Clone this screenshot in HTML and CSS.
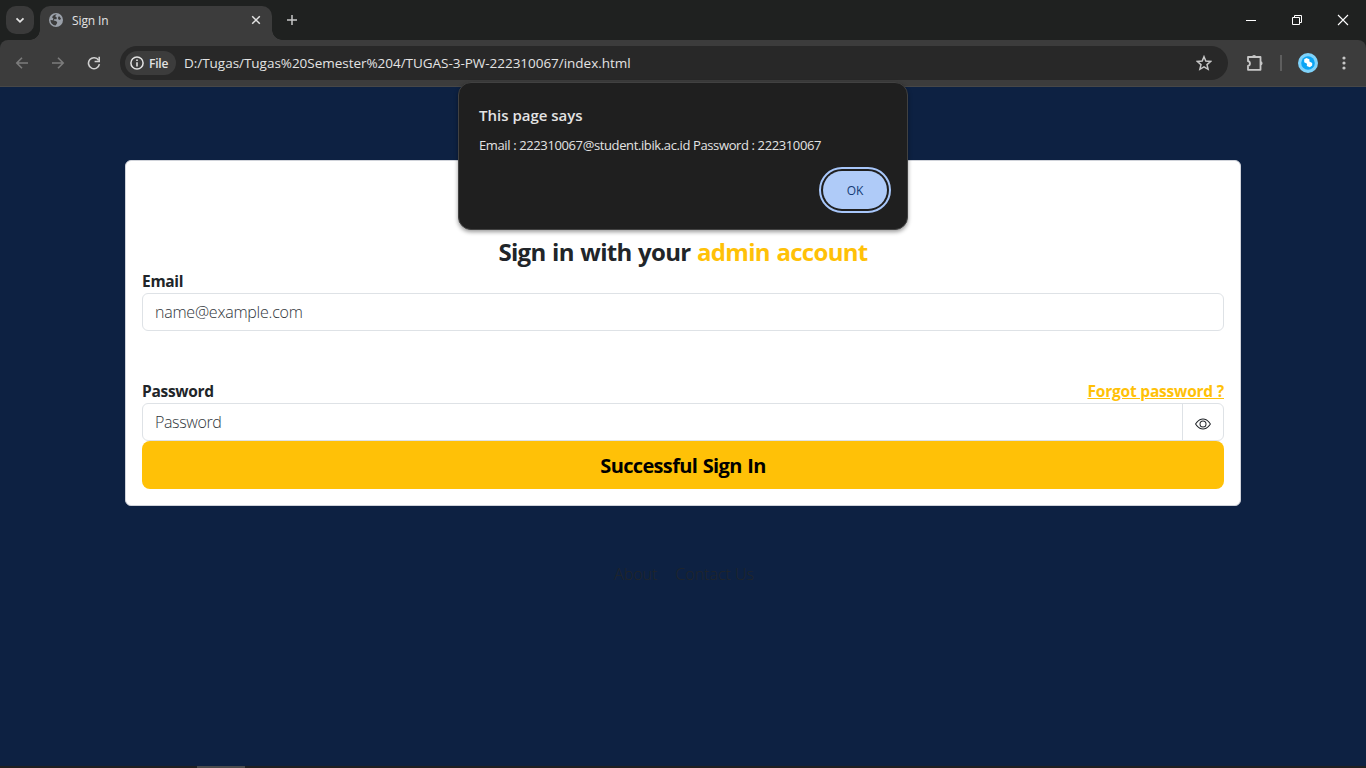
FILE: index.html
```html
<!DOCTYPE html>
<html lang="en">
<head>
<meta charset="utf-8">
<title>Sign In</title>
<link rel="stylesheet" href="styles.css">
</head>
<body>
<div class="window">
  <header class="tabstrip">
    <div class="tab-search"><svg width="16" height="16" viewBox="0 0 16 16"><path d="M4.500 6.300L8 9.800l3.500-3.500" fill="none" stroke="#e3e3e3" stroke-width="1.800"/></svg></div>
    <div class="tab">
      <svg class="globe" width="16" height="16" viewBox="0 0 16 16"><circle cx="8" cy="8" r="7" fill="#9aa0a9"/><path d="M8.800 2.300L7.500 3.500v1.200L9 5.800 8.300 7.200H6.200L5.600 8.400 8 9l1.200 1.200-.4 1.500-1.300 1.800C4.600 13.200 2.500 10.800 2.500 8l2.300.2.600-1.700L4 5.200C5 3.300 6.800 2.300 8.800 2.300zM11 4l2 2.500-1 1.500-1.800-.7-.2-1.500z" fill="#3c3c3c"/></svg>
      <span class="tab-title">Sign In</span>
      <svg class="tab-close" width="12" height="12" viewBox="0 0 12 12"><path d="M2.200 2.200l7.600 7.600M9.800 2.200L2.200 9.800" stroke="#e3e3e3" stroke-width="1.500"/></svg>
    </div>
    <svg class="new-tab" width="12" height="12" viewBox="0 0 12 12"><path d="M6 1v10M1 6h10" stroke="#c7c7c7" stroke-width="1.500"/></svg>
    <div class="controls">
      <svg width="12" height="12" viewBox="0 0 12 12"><path d="M1 6.500h10" stroke="#fff"/></svg>
      <svg width="12" height="12" viewBox="0 0 12 12"><path d="M1.500 3.500h7v7h-7zM3.500 3.500v-2h7v7h-2" fill="none" stroke="#fff"/></svg>
      <svg width="12" height="12" viewBox="0 0 12 12"><path d="M1 1l10 10M11 1L1 11" stroke="#fff" stroke-width="1.100"/></svg>
    </div>
  </header>
  <nav class="toolbar">
    <svg class="back" width="14" height="14" viewBox="0 0 14 14"><path d="M13 7H2M7 1.800L1.800 7 7 12.200" fill="none" stroke="#7c7c7c" stroke-width="1.600"/></svg>
    <svg class="forward" width="14" height="14" viewBox="0 0 14 14"><path d="M1 7h11M7 1.800L12.200 7 7 12.200" fill="none" stroke="#7c7c7c" stroke-width="1.600"/></svg>
    <svg class="reload" width="14" height="14" viewBox="0 0 14 14"><path d="M12.400 8.200A5.500 5.500 0 1 1 11.600 4.200" fill="none" stroke="#d0d0d0" stroke-width="1.600"/><path d="M13 .8v5.400H7.600V4.700h3.800V.8z" fill="#d0d0d0"/></svg>
    <div class="omnibox">
      <div class="chip"><svg width="14" height="14" viewBox="0 0 14 14"><circle cx="7" cy="7" r="6.100" fill="none" stroke="#e3e3e3" stroke-width="1.500"/><path d="M7 6.200v4.200M7 3.400v1.600" stroke="#e3e3e3" stroke-width="1.600"/></svg><span>File</span></div>
      <span class="url">D:/Tugas/Tugas%20Semester%204/TUGAS-3-PW-222310067/index.html</span>
      <svg class="star" width="16" height="16" viewBox="0 0 16 16"><path d="M8 1.700l1.800 4.400 4.800.4-3.600 3.100 1.100 4.700L8 11.800l-4.100 2.500L5 9.600 1.400 6.500l4.800-.4z" fill="none" stroke="#c7c7c7" stroke-width="1.500"/></svg>
    </div>
    <svg class="puzzle" width="18" height="18" viewBox="0 0 18 18"><path d="M2 3h12.500v12.800H2v-4c2.600-.4 2.600-4.200 0-4.600z" fill="none" stroke="#c7c7c7" stroke-width="1.800" stroke-linejoin="round"/><path d="M6 3a2.100 2.100 0 0 1 4.200 0zM14.500 7.200a2.100 2.100 0 0 1 0 4.200z" fill="#c7c7c7"/></svg>
    <span class="divider"></span>
    <svg class="profile" width="20" height="20" viewBox="0 0 20 20"><circle cx="10" cy="10" r="10" fill="#7fd3fb"/><circle cx="10" cy="10" r="6.800" fill="#0aa5f5"/><path d="M6.200 6.300l2.200-1.300 3 1.200v2.300l2.800 1.500v2.500l-2.400 1.800-3-1.200.2-2.300-2.800-1.500z" fill="#fff"/></svg>
    <svg class="menu" width="4" height="16" viewBox="0 0 4 16"><g fill="#c7c7c7"><circle cx="2" cy="3" r="1.600"/><circle cx="2" cy="8" r="1.600"/><circle cx="2" cy="13" r="1.600"/></g></svg>
  </nav>
  <main class="page">
    <section class="card">
      <h1 class="heading">Sign in with your <span>admin account</span></h1>
      <div class="label-row"><label class="label">Email</label></div>
      <div class="field"><span class="placeholder mail">name@example.com</span></div>
      <div class="label-row second"><label class="label">Password</label><a class="forgot">Forgot password ?</a></div>
      <div class="field"><span class="placeholder pass">Password</span>
        <div class="reveal"><svg width="16" height="16" viewBox="0 0 16 16" fill="#212529"><path d="M16 8s-3-5.500-8-5.500S0 8 0 8s3 5.500 8 5.500S16 8 16 8M1.173 8a13 13 0 0 1 1.660-2.043C4.120 4.668 5.880 3.500 8 3.500s3.879 1.168 5.168 2.457A13 13 0 0 1 14.828 8q-.086.130-.195.288c-.335.480-.830 1.120-1.465 1.755C11.879 11.332 10.119 12.500 8 12.500s-3.879-1.168-5.168-2.457A13 13 0 0 1 1.172 8z"/><path d="M8 5.500a2.500 2.500 0 1 0 0 5 2.500 2.500 0 0 0 0-5M4.500 8a3.500 3.500 0 1 1 7 0 3.500 3.500 0 0 1-7 0"/></svg></div>
      </div>
      <button class="submit">Successful Sign In</button>
    </section>
    <footer class="links"><span class="about">About</span><span class="contact">Contact Us</span></footer>
  </main>
  <div class="taskbar"><span></span></div>
  <div class="dialog">
    <div class="dialog-title">This page says</div>
    <div class="dialog-text">Email : 222310067@student.ibik.ac.id Password : 222310067</div>
    <div class="actions"><button class="ok">OK</button></div>
  </div>
</div>
</body>
</html>
```
FILE: styles.css
```css
* { box-sizing: border-box; }
body { margin: 0; font-family: "Open Sans", "Noto Sans", sans-serif; }
svg { display: block; flex: none; }
span, label, a, h1, button, .dialog-title, .dialog-text { white-space: nowrap; }
.window { position: relative; width: 1366px; height: 768px; overflow: hidden; display: flex; flex-direction: column; background: #1f2120; }
.tabstrip { height: 40px; flex: none; display: flex; align-items: center; padding-left: 6px; }
.tab-search { width: 28px; height: 28px; border-radius: 10px; background: #3a3a3a; display: flex; align-items: center; justify-content: center; }
.tab { position: relative; width: 232px; height: 34px; margin: 6px 0 0 6px; padding: 0 10px 6px 8px; border-radius: 10px 10px 0 0; background: #3c3c3c; display: flex; align-items: center; }
.tab::before, .tab::after { content: ""; position: absolute; bottom: 0; width: 10px; height: 10px; }
.tab::before { left: -10px; background: radial-gradient(circle at 0 0, transparent 9.500px, #3c3c3c 10px); }
.tab::after { right: -10px; background: radial-gradient(circle at 100% 0, transparent 9.500px, #3c3c3c 10px); }
.tab-title { margin-left: 8px; font-size: 12px; letter-spacing: -.1px; color: #e3e3e3; }
.tab-close { margin-left: auto; }
.new-tab { margin-left: 14px; }
.controls { margin-left: auto; margin-right: 17px; display: flex; gap: 34px; }
.toolbar { height: 47px; flex: none; display: flex; align-items: center; padding-left: 15px; background: #3c3c3c; border-bottom: 1px solid #474747; border-radius: 8px 8px 0 0; }
.forward, .reload { margin-left: 22px; }
.omnibox { width: 1108px; height: 34px; margin-left: 19px; padding: 0 16px 0 5px; display: flex; align-items: center; border-radius: 17px; background: #282828; }
.chip { width: 51px; height: 24px; padding-left: 5px; border-radius: 12px; background: #3c3c3c; display: flex; align-items: center; gap: 5px; color: #e3e3e3; font-size: 12px; font-weight: 600; letter-spacing: -.2px; }
.url { margin-left: 8px; font-size: 13.500px; letter-spacing: -.03px; color: #e3e3e3; }
.star { margin-left: auto; }
.puzzle { margin-left: 18px; }
.divider { width: 2px; height: 16px; margin-left: 16px; background: #5e5e5e; }
.profile { margin-left: 16px; }
.menu { margin-left: 24px; }
.page { flex: 1; padding: 73px 125px 0; background: #0d2142; }
.card { height: 346px; padding: 76px 16px 16px; border: 1px solid #d0d3da; border-radius: 6px; background: #fff; color: #212529; display: flex; flex-direction: column; }
.heading { margin: 0 0 5px; text-align: center; font-size: 24px; line-height: 29px; font-weight: 700; letter-spacing: -.7px; word-spacing: 1px; }
.heading span { color: #ffc107; }
.label-row { height: 22px; display: flex; justify-content: space-between; line-height: 21px; font-size: 15.500px; font-weight: 700; letter-spacing: -.3px; }
.label-row.second { margin-top: 50px; }
.forgot { color: #ffc107; text-decoration: underline; letter-spacing: -.2px; }
.field { height: 38px; flex: none; border: 1px solid #dee2e6; border-radius: 6px; padding-left: 12px; display: flex; align-items: center; }
.placeholder { font-size: 16px; font-weight: 300; color: #30363b; letter-spacing: -.23px; }
.pass { letter-spacing: -.38px; }
.reveal { width: 41px; height: 36px; margin-left: auto; padding-top: 4px; border-left: 1px solid #dee2e6; display: flex; align-items: center; justify-content: center; }
.submit { height: 48px; flex: none; padding: 0; border: 0; border-radius: 8px; background: #ffc107; color: #000; font: 700 20px "Open Sans", sans-serif; letter-spacing: -.65px; word-spacing: 1px; }
.links { margin-top: 56px; padding-left: 2px; height: 24px; display: flex; justify-content: center; gap: 18px; font-size: 16px; line-height: 24px; font-weight: 300; color: #212529; }
.taskbar { height: 2px; flex: none; padding-left: 197px; background: #202020; }
.taskbar span { display: block; width: 48px; height: 2px; background: #4b4b4b; }
.dialog { position: absolute; left: 458px; top: 82px; width: 450px; height: 148px; padding: 21px 20px 0 20px; border: 1px solid #414141; border-radius: 13px; background: #1f1f1f; box-shadow: 0 2px 4px rgba(0,0,0,.4); color: #e3e3e3; }
.dialog-title { font-size: 15px; font-weight: 600; line-height: 22px; }
.dialog-text { margin-top: 9px; font-size: 13px; line-height: 20px; letter-spacing: -.38px; }
.actions { margin-top: 16px; display: flex; justify-content: flex-end; }
.ok { width: 64px; height: 38px; padding: 0; border: 0; border-radius: 19px; background: #afcbf8; color: #143b75; font: 500 12px "Open Sans", sans-serif; outline: 2px solid #a8c7fa; outline-offset: 2px; }
```
